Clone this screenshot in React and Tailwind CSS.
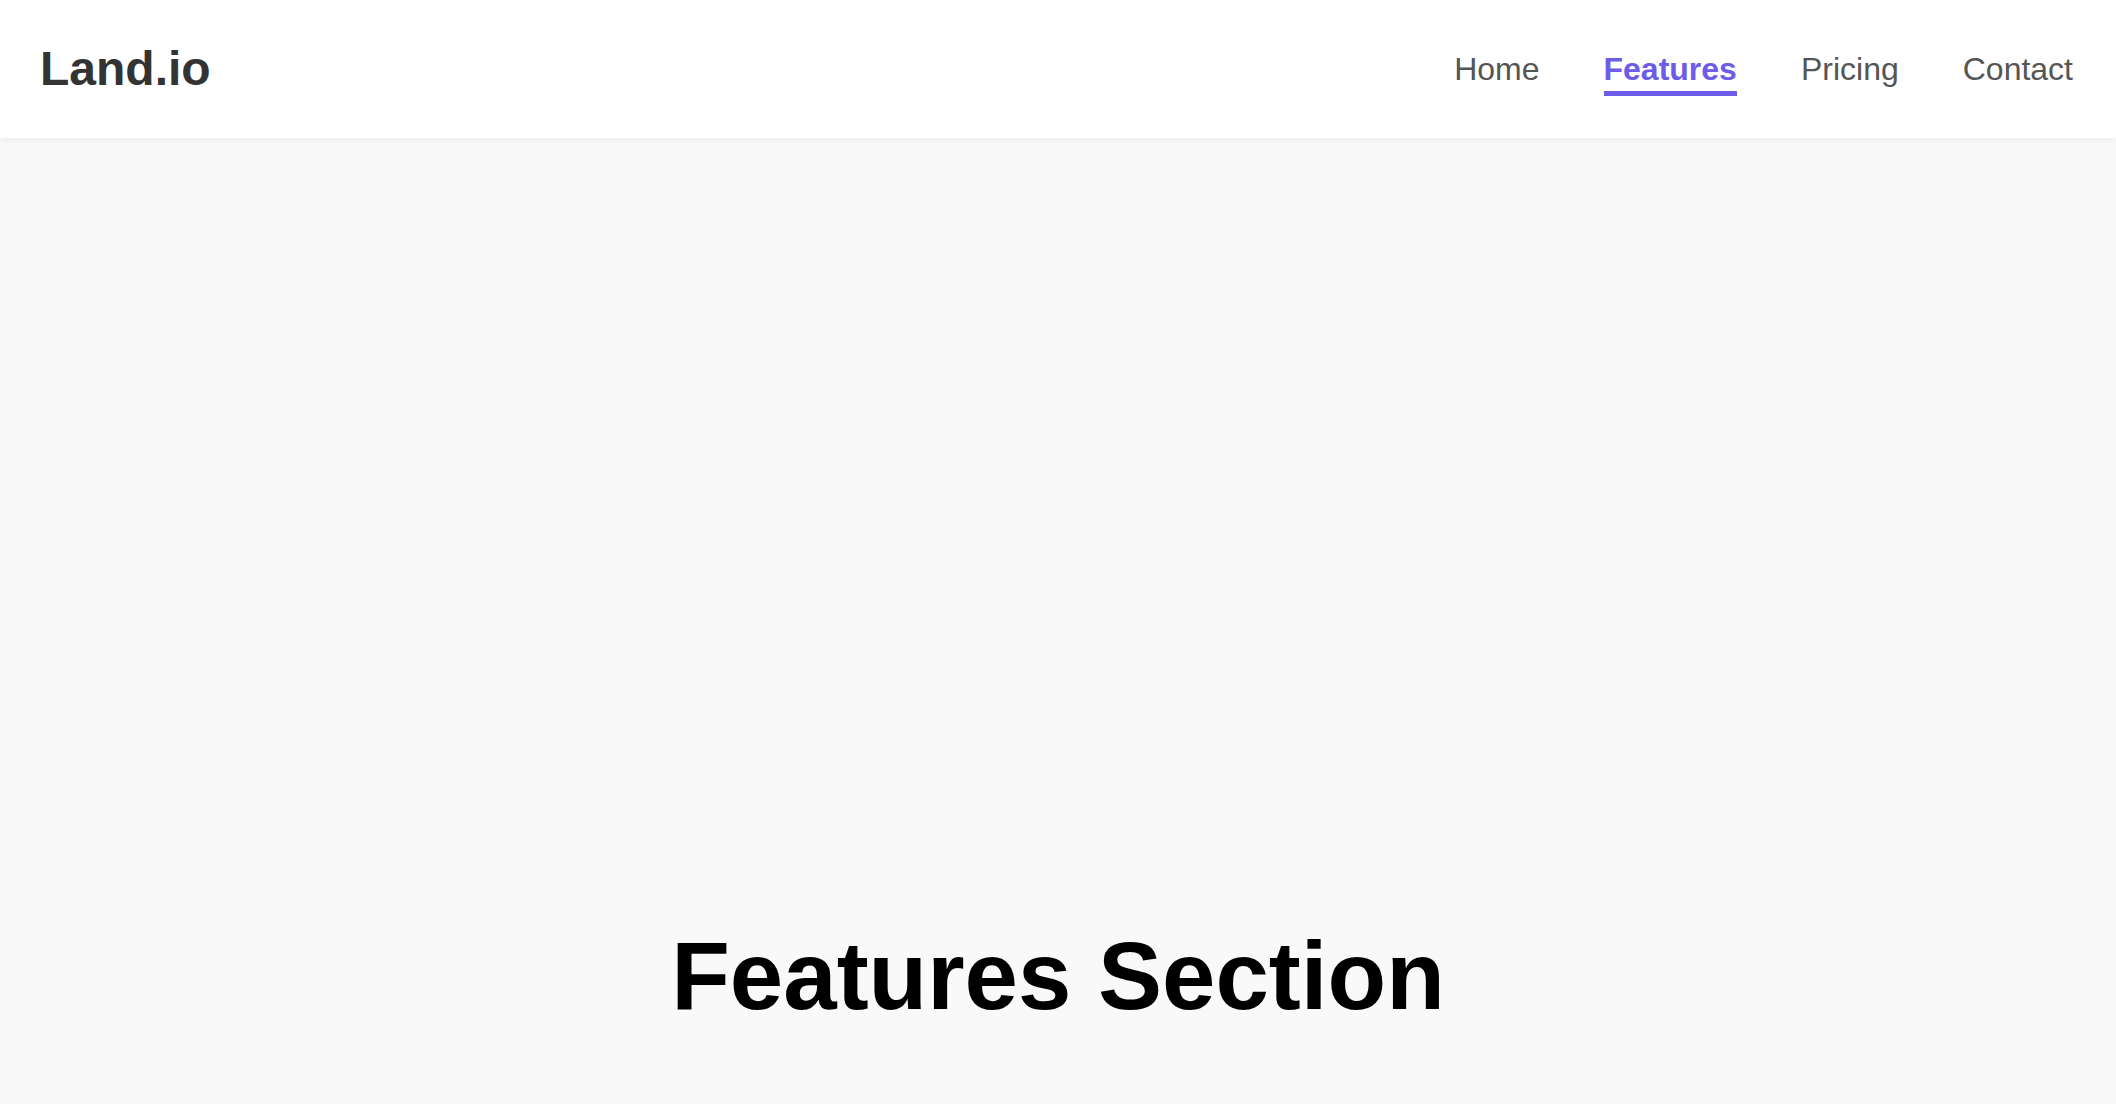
const links = ["Home", "Features", "Pricing", "Contact"];

const App = () => {
  const active = "Features";

  return (
    <div
      className="min-h-screen bg-[#f9f9f9]"
      style={{ fontFamily: '"Liberation Sans", Arial, sans-serif' }}
    >
      {/* Header */}
      <header className="relative z-10 h-[138px] bg-white pl-10 pr-[43px] flex items-center justify-between shadow-[0_2px_8px_rgba(0,0,0,0.06)]">
        <a href="#" className="text-[48px] font-bold text-[#333333] leading-[1.15]">
          Land.io
        </a>

        <nav className="flex items-center gap-16 text-[32px] leading-[1.15]">
          {links.map((link) =>
            link === active ? (
              <a
                key={link}
                href="#"
                className="pt-[9px] pb-[4px] border-b-[5px] border-[#6c5ce7] font-bold text-[#6c5ce7]"
              >
                {link}
              </a>
            ) : (
              <a
                key={link}
                href="#"
                className="pt-[9px] pb-[4px] border-b-[5px] border-transparent text-[#555555] hover:text-[#6c5ce7]"
              >
                {link}
              </a>
            )
          )}
        </nav>
      </header>

      {/* Features */}
      <main className="flex justify-center pt-[790px]">
        <h2 className="text-[96px] font-bold leading-none text-black">
          Features Section
        </h2>
      </main>
    </div>
  );
};

export default App;
